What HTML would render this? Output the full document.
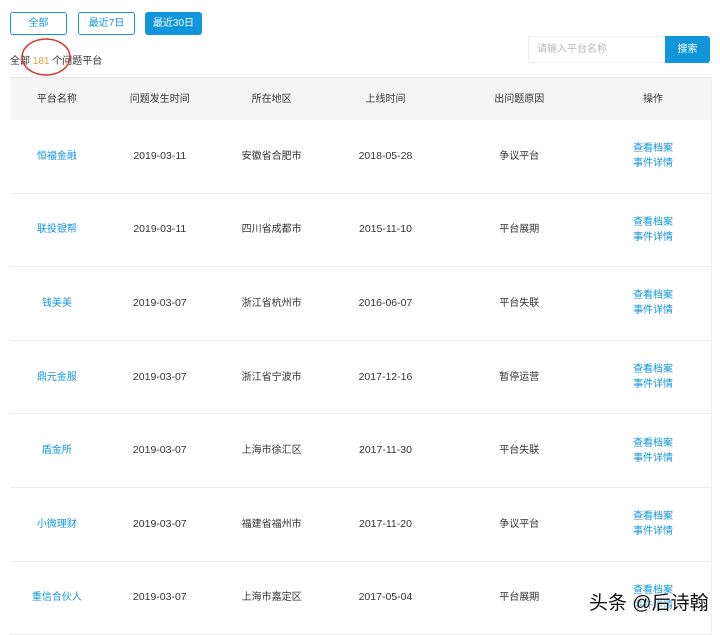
<!DOCTYPE html>
<html><head><meta charset="utf-8"><style>
*{margin:0;padding:0;box-sizing:border-box}
body{width:720px;height:626px;overflow:hidden;background:#fff;font-family:"Liberation Sans","Noto Sans CJK SC",sans-serif;font-size:10px;color:#333;position:relative}
.btn{position:absolute;top:12px;height:23px;width:57px;border:1px solid #1296db;border-radius:3px;color:#1296db;text-align:center;line-height:21px;font-size:10px}
.btn.on{background:#1296db;color:#fff}
.tbl{position:absolute;left:10px;top:77px;width:702px;border-top:1px solid #e6e6e6;border-right:1px solid #eee}
.row{display:flex;height:73.6px;border-bottom:1px solid #ececec;align-items:center}
.hd{background:#f5f5f5;height:42px;border-bottom:none}
.row div{text-align:center;line-height:15px;height:15px}
.row div.op{height:30px}
.d{font-size:10.5px}
.c1{width:94px}.c2{width:112px}.c3{width:112px}.c4{width:116px}.c5{width:152px}.c6{width:116px}
.blue{color:#1296db}
</style></head><body>
<div class="btn" style="left:10px">全部</div>
<div class="btn" style="left:78px">最近7日</div>
<div class="btn on" style="left:145px">最近30日</div>
<div style="position:absolute;left:10px;top:52px;font-size:10px">全部 <span style="color:#f0a040">181</span> 个问题平台</div>
<svg style="position:absolute;left:21px;top:37px" width="52" height="40"><ellipse cx="25" cy="20" rx="24" ry="18" fill="none" stroke="#d83a3a" stroke-width="1.5"/></svg>
<div style="position:absolute;left:528px;top:36px;width:138px;height:27px;border:1px solid #eee;color:#bbb;font-size:10px;line-height:25px;padding-left:8px">请输入平台名称</div>
<div style="position:absolute;left:665px;top:36px;width:45px;height:27px;background:#1296db;color:#fff;border-radius:0 3px 3px 0;text-align:center;line-height:27px;font-size:10px">搜索</div>
<div class="tbl">
<div class="row hd"><div class="c1">平台名称</div><div class="c2">问题发生时间</div><div class="c3">所在地区</div><div class="c4">上线时间</div><div class="c5">出问题原因</div><div class="c6">操作</div></div>
<div class="row"><div class="c1 blue">恒福金融</div><div class="c2 d">2019-03-11</div><div class="c3">安徽省合肥市</div><div class="c4 d">2018-05-28</div><div class="c5">争议平台</div><div class="c6 blue op">查看档案<br>事件详情</div></div>
<div class="row"><div class="c1 blue">联投银帮</div><div class="c2 d">2019-03-11</div><div class="c3">四川省成都市</div><div class="c4 d">2015-11-10</div><div class="c5">平台展期</div><div class="c6 blue op">查看档案<br>事件详情</div></div>
<div class="row"><div class="c1 blue">钱美美</div><div class="c2 d">2019-03-07</div><div class="c3">浙江省杭州市</div><div class="c4 d">2016-06-07</div><div class="c5">平台失联</div><div class="c6 blue op">查看档案<br>事件详情</div></div>
<div class="row"><div class="c1 blue">鼎元金服</div><div class="c2 d">2019-03-07</div><div class="c3">浙江省宁波市</div><div class="c4 d">2017-12-16</div><div class="c5">暂停运营</div><div class="c6 blue op">查看档案<br>事件详情</div></div>
<div class="row"><div class="c1 blue">盾金所</div><div class="c2 d">2019-03-07</div><div class="c3">上海市徐汇区</div><div class="c4 d">2017-11-30</div><div class="c5">平台失联</div><div class="c6 blue op">查看档案<br>事件详情</div></div>
<div class="row"><div class="c1 blue">小微理财</div><div class="c2 d">2019-03-07</div><div class="c3">福建省福州市</div><div class="c4 d">2017-11-20</div><div class="c5">争议平台</div><div class="c6 blue op">查看档案<br>事件详情</div></div>
<div class="row"><div class="c1 blue">重信合伙人</div><div class="c2 d">2019-03-07</div><div class="c3">上海市嘉定区</div><div class="c4 d">2017-05-04</div><div class="c5">平台展期</div><div class="c6 blue op">查看档案<br>事件详情</div></div>
</div>
<div style="position:absolute;left:589px;top:588px;font-size:19px;color:#111;text-shadow:0 0 2px #fff,0 0 2px #fff">头条 @后诗翰</div>
</body></html>
